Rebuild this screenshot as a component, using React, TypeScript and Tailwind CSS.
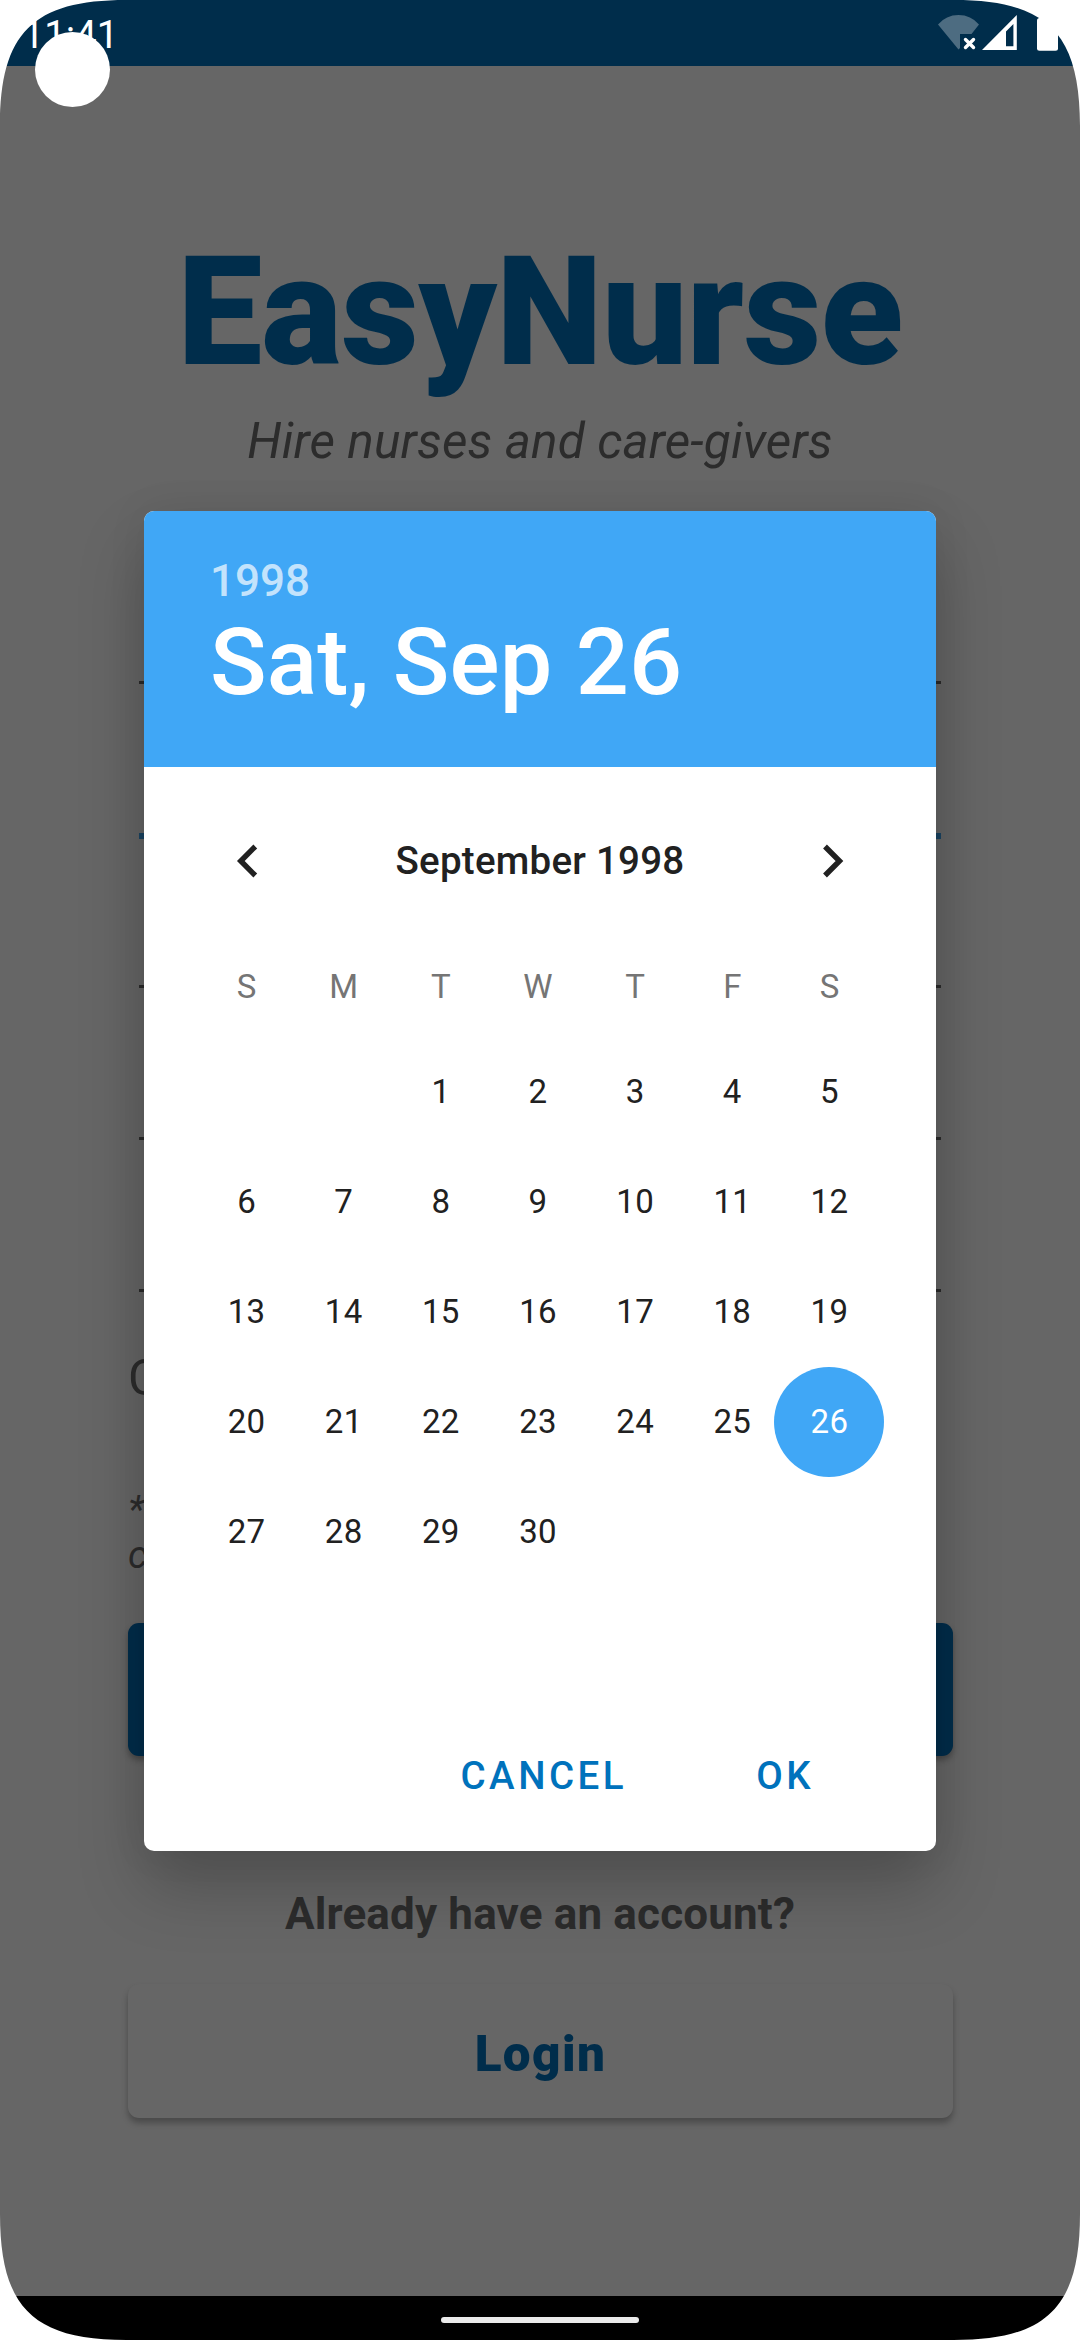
const WEEKDAYS = ["S", "M", "T", "W", "T", "F", "S"];
const LEADING_BLANKS = 2;
const DAYS = Array.from({ length: 30 }, (_, i) => i + 1);
const SELECTED = 26;

function StatusIcons() {
  return (
    <svg className="absolute top-0 right-0" width="160" height="66" viewBox="920 0 160 66">
      <path
        d="M938 24.5 Q946 15 958.5 15 Q971 15 979 24.5 L971.5 34 H960 V48 L958.5 49.5 Z"
        fill="#4d6c81"
      />
      <path d="M965.5 39.5 L973.5 47.5 M973.5 39.5 L965.5 47.5" stroke="#fff" strokeWidth="3.4" strokeLinecap="round" />
      <path d="M1016.8 15 V50 H982 Z M1013.4 24 L1006 31.5 V46.2 H1013.4 Z" fill="#fff" fillRule="evenodd" />
      <rect x="1037" y="18" width="21" height="32.7" rx="2.5" fill="#fff" />
    </svg>
  );
}

function StatusBar() {
  return (
    <header className="relative h-[66px] shrink-0 bg-[#002d4b]">
      <span className="block pl-[22.5px] pt-[13px] text-[38.5px] leading-[44px] text-white">11:41</span>
      <StatusIcons />
    </header>
  );
}

function SignUpScreen() {
  return (
    <main className="flex h-[2230px] shrink-0 flex-col overflow-hidden px-32 text-[#2c2c2c]">
      <h1 className="mt-[158px] text-center text-[151.25px] leading-[177px] font-black tracking-[-0.5px] whitespace-nowrap text-[#002d4b]">
        EasyNurse
      </h1>
      <p className="mt-[11px] text-center text-[49.5px] leading-[58px] tracking-[0.15px] italic">
        Hire nurses and care-givers
      </p>
      <div className="mt-[65px] flex h-[757px] flex-col pl-[11px] pr-[11px]">
        <div className="h-[149px] shrink-0 border-b-[3px] border-[#2c2c2c]" />
        <div className="h-[155px] shrink-0 border-b-[6px] border-[#1a4463]" />
        <div className="h-[149px] shrink-0 border-b-[3px] border-[#2c2c2c]" />
        <div className="h-[152px] shrink-0 border-b-[3px] border-[#2c2c2c]" />
        <div className="h-[152px] shrink-0 border-b-[3px] border-[#2c2c2c]" />
      </div>
      <p className="mt-[57px] h-[58px] text-[49.5px] leading-[58px]">C</p>
      <p className="mt-[80px] h-[90px] text-[38.5px] leading-[45px] italic">
        *<br />c
      </p>
      <div className="mt-[46px] h-[133px] w-[825px] shrink-0 rounded-[11px] bg-[#002d4b] shadow-[0_4px_6px_rgba(0,0,0,0.3)]" />
      <p className="mt-[132px] text-center text-[44px] leading-[52px] font-bold tracking-[0.16px]">
        Already have an account?
      </p>
      <button className="mt-[44px] h-[133.5px] w-[825px] shrink-0 rounded-[11px] bg-[#666] pt-[7px] text-[49.5px] leading-[58px] font-black tracking-[1.4px] text-[#002d4b] shadow-[0_5px_6px_rgba(0,0,0,0.28)]">
        Login
      </button>
    </main>
  );
}

function Chevron({ points }: { points: string }) {
  return (
    <svg width="66" height="66" viewBox="0 0 66 66" fill="none" stroke="#212121" strokeWidth="5.4">
      <polyline points={points} />
    </svg>
  );
}

function DatePicker() {
  return (
    <section className="absolute top-[511px] left-36 flex h-[1340px] w-[792px] flex-col overflow-visible rounded-[10px] bg-white shadow-[0_36px_66px_rgba(0,0,0,0.22),0_0_40px_rgba(0,0,0,0.07)]">
      <div className="h-64 rounded-t-[10px] bg-[#40a7f6] px-[66px] pt-[44px] font-medium text-white">
        <p className="text-[44px] leading-[52px] text-white/70">1998</p>
        <p className="text-[93.5px] leading-[110px] tracking-[0.1px]">Sat, Sep 26</p>
      </div>
      <div className="mt-[61px] flex h-[66px] items-center justify-between px-[70px] text-[#212121]">
        <Chevron points="41.3,18.5 26.8,33 41.3,47.5" />
        <span className="text-[38.5px] leading-[44px] font-medium tracking-[0.25px]">September 1998</span>
        <Chevron points="25,18.5 39.5,33 25,47.5" />
      </div>
      <div className="mt-[66px] ml-[54px] grid w-[680px] grid-cols-7 text-center text-[33px] leading-[54px] text-[#757575]">
        {WEEKDAYS.map((d, i) => (
          <span key={i}>{d}</span>
        ))}
      </div>
      <div className="mt-[23px] ml-[54px] grid w-[680px] auto-rows-[110px] grid-cols-7 justify-items-center text-[33px] leading-[110px] tracking-[0.3px] text-[#212121]">
        {Array.from({ length: LEADING_BLANKS }, (_, i) => (
          <span key={`blank-${i}`} />
        ))}
        {DAYS.map((d) => (
          <span
            key={d}
            className={
              d === SELECTED
                ? "-mx-[7px] w-[110px] rounded-full bg-[#40a7f6] text-center text-white"
                : "text-center"
            }
          >
            {d}
          </span>
        ))}
      </div>
      <div className="mt-[163px] flex justify-end pr-[122px] text-[38.5px] leading-[52px] font-medium tracking-[3.5px] text-[#0072bc]">
        <span className="mr-[129px]">CANCEL</span>
        <span>OK</span>
      </div>
    </section>
  );
}

function DeviceFrame() {
  return (
    <svg className="absolute inset-0" width="1080" height="2340" viewBox="0 0 1080 2340" fill="#fff">
      <path d="M0 0 H126 C33 0 0 33 0 126 Z" />
      <path d="M1080 0 H954 C1047 0 1080 33 1080 126 Z" />
      <path d="M0 2340 H126 C33 2340 0 2307 0 2214 Z" />
      <path d="M1080 2340 H954 C1047 2340 1080 2307 1080 2214 Z" />
      <circle cx="72.5" cy="69.5" r="37.5" />
    </svg>
  );
}

export default function App() {
  return (
    <div className="relative flex h-[2340px] w-[1080px] flex-col overflow-hidden bg-[#666] font-['Roboto',sans-serif]">
      <StatusBar />
      <SignUpScreen />
      <footer className="flex h-11 shrink-0 items-center justify-center bg-black pt-[4px]">
        <div className="h-[6px] w-[198px] rounded-full bg-[#eaeaea]" />
      </footer>
      <DatePicker />
      <DeviceFrame />
    </div>
  );
}
